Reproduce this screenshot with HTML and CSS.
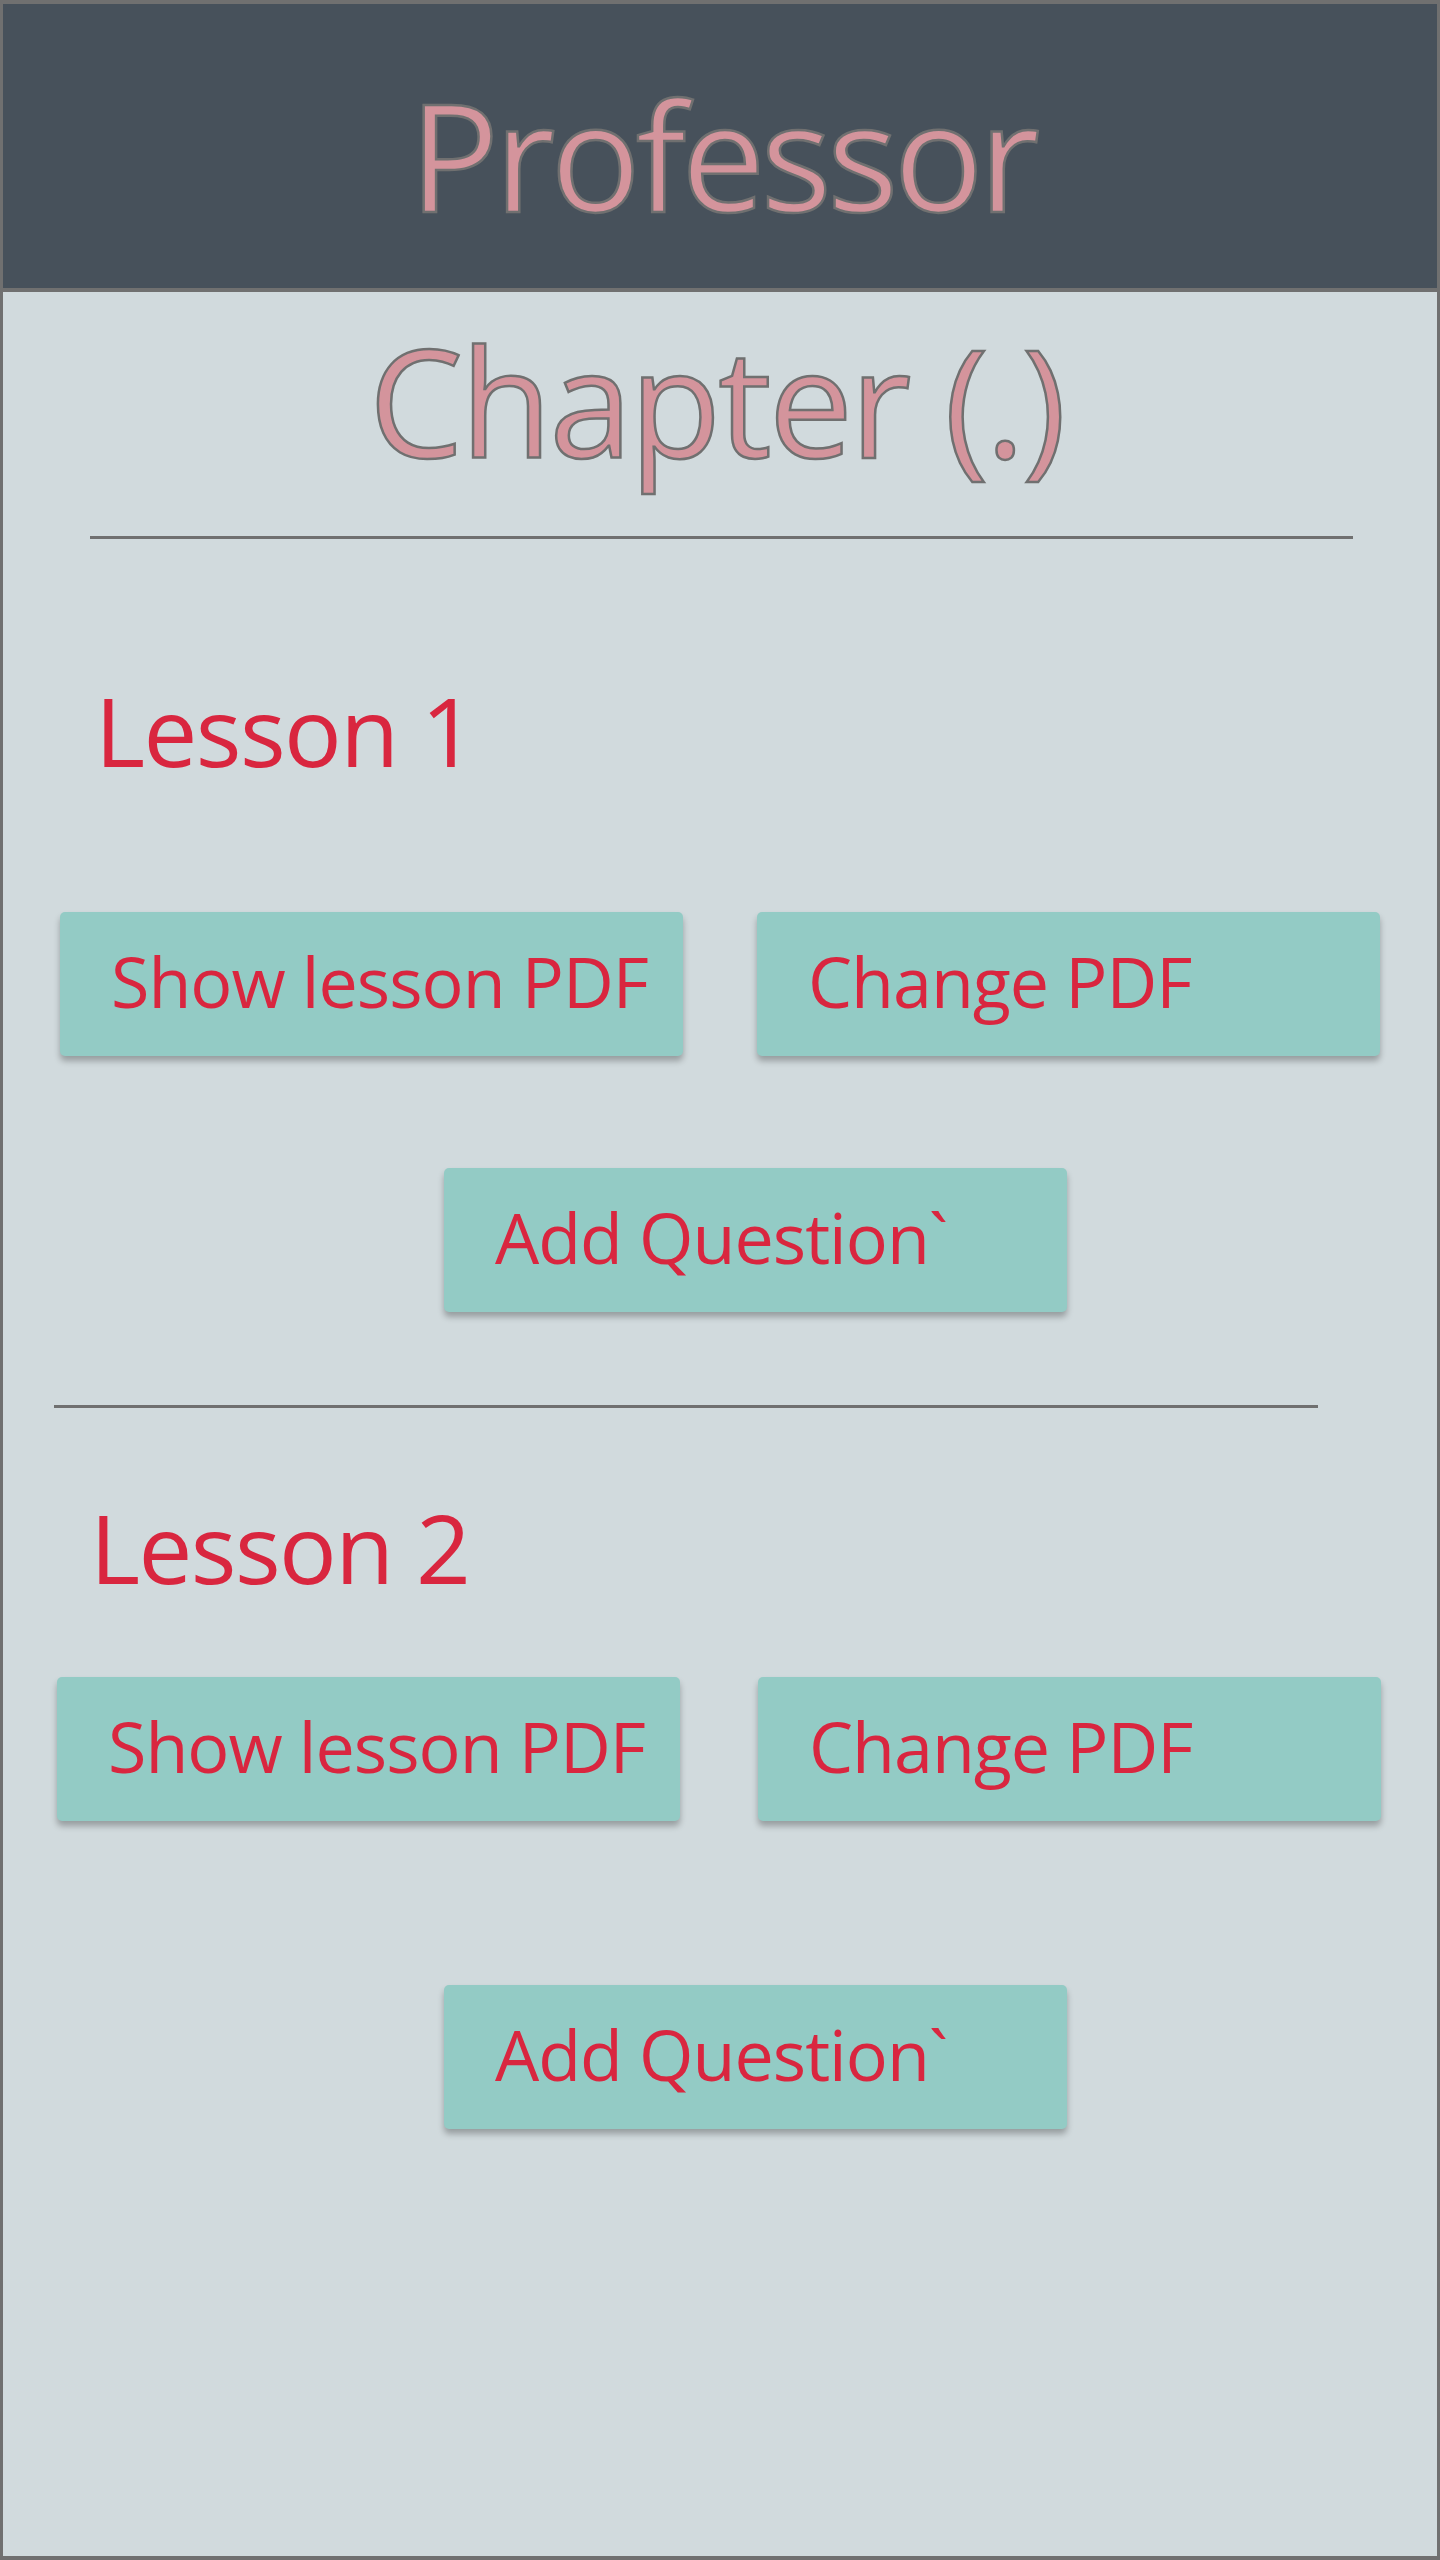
FILE: index.html
```html
<!DOCTYPE html>
<html lang="en">
<head>
<meta charset="utf-8">
<title>Professor</title>
<link rel="stylesheet" href="styles.css">
</head>
<body>
<div class="frame">
  <header class="topbar">
    <h1 class="outlined title">Professor</h1>
  </header>
  <main class="content">
    <h2 class="outlined chapter">Chapter (.)</h2>
    <hr class="rule rule-1">

    <section class="lesson lesson-1">
      <h3 class="lesson-title">Lesson 1</h3>
      <div class="btn-row">
        <button class="btn">Show lesson PDF</button>
        <button class="btn">Change PDF</button>
      </div>
      <div class="btn-single">
        <button class="btn">Add Question`</button>
      </div>
    </section>

    <hr class="rule rule-2">

    <section class="lesson lesson-2">
      <h3 class="lesson-title">Lesson 2</h3>
      <div class="btn-row">
        <button class="btn">Show lesson PDF</button>
        <button class="btn">Change PDF</button>
      </div>
      <div class="btn-single">
        <button class="btn">Add Question`</button>
      </div>
    </section>
  </main>
</div>
</body>
</html>
```

FILE: styles.css
```css
* { box-sizing: border-box; }

html, body {
  margin: 0;
  padding: 0;
}

body {
  font-family: "Open Sans", "Noto Sans", "Liberation Sans", sans-serif;
  background: #d1dadd;
}

.frame {
  width: 1440px;
  height: 2560px;
  border: 4px solid #707070;
  border-left-width: 3px;
  border-right-width: 3px;
  background: #d1dadd;
  display: flex;
  flex-direction: column;
}

.topbar {
  background: #47515b;
  border-bottom: 4px solid #707070;
  padding: 75px 0 59px;
  text-align: center;
}

.outlined {
  margin: 0;
  font-weight: 400;
  font-size: 150px;
  line-height: 1;
  color: #d4949c;
  -webkit-text-stroke: 2.5px #707070;
  text-align: center;
}

.title {
  letter-spacing: -5px;
  padding-left: 4px;
}

.chapter {
  margin-top: 33px;
  letter-spacing: -3px;
  padding-right: 8px;
}

.content {
  flex: 1;
  display: flex;
  flex-direction: column;
}

.rule {
  border: 0;
  height: 3px;
  background: #707070;
  margin: 0;
}

.rule-1 {
  margin: 61px 0 0 87px;
  width: 1263px;
}

.rule-2 {
  margin: 93px 0 0 51px;
  width: 1264px;
}

.lesson {
  display: flex;
  flex-direction: column;
}

.lesson-title {
  margin: 0;
  font-weight: 400;
  font-size: 96px;
  line-height: 1;
  color: #d9263f;
  letter-spacing: -1.6px;
}

.lesson-1 .lesson-title {
  margin: 143px 0 0 92px;
}

.lesson-2 .lesson-title {
  margin: 91px 0 0 87px;
}

.btn-row {
  display: flex;
}

.lesson-1 .btn-row {
  margin: 134px 0 0 57px;
  gap: 74px;
}

.lesson-2 .btn-row {
  margin: 82px 0 0 54px;
  gap: 78px;
}

.btn-single {
  display: flex;
  padding-left: 441px;
}

.lesson-1 .btn-single {
  margin-top: 112px;
}

.lesson-2 .btn-single {
  margin-top: 164px;
}

.btn {
  width: 623px;
  height: 144px;
  padding: 0 0 6px 51px;
  border: 0;
  border-radius: 5px;
  background: #93cbc5;
  color: #d9263f;
  font-family: "Open Sans", "Noto Sans", "Liberation Sans", sans-serif;
  font-size: 70px;
  line-height: 1;
  letter-spacing: -1px;
  text-align: left;
  box-shadow: 0 5px 6px rgba(0, 0, 0, 0.28);
  cursor: pointer;
}
```
